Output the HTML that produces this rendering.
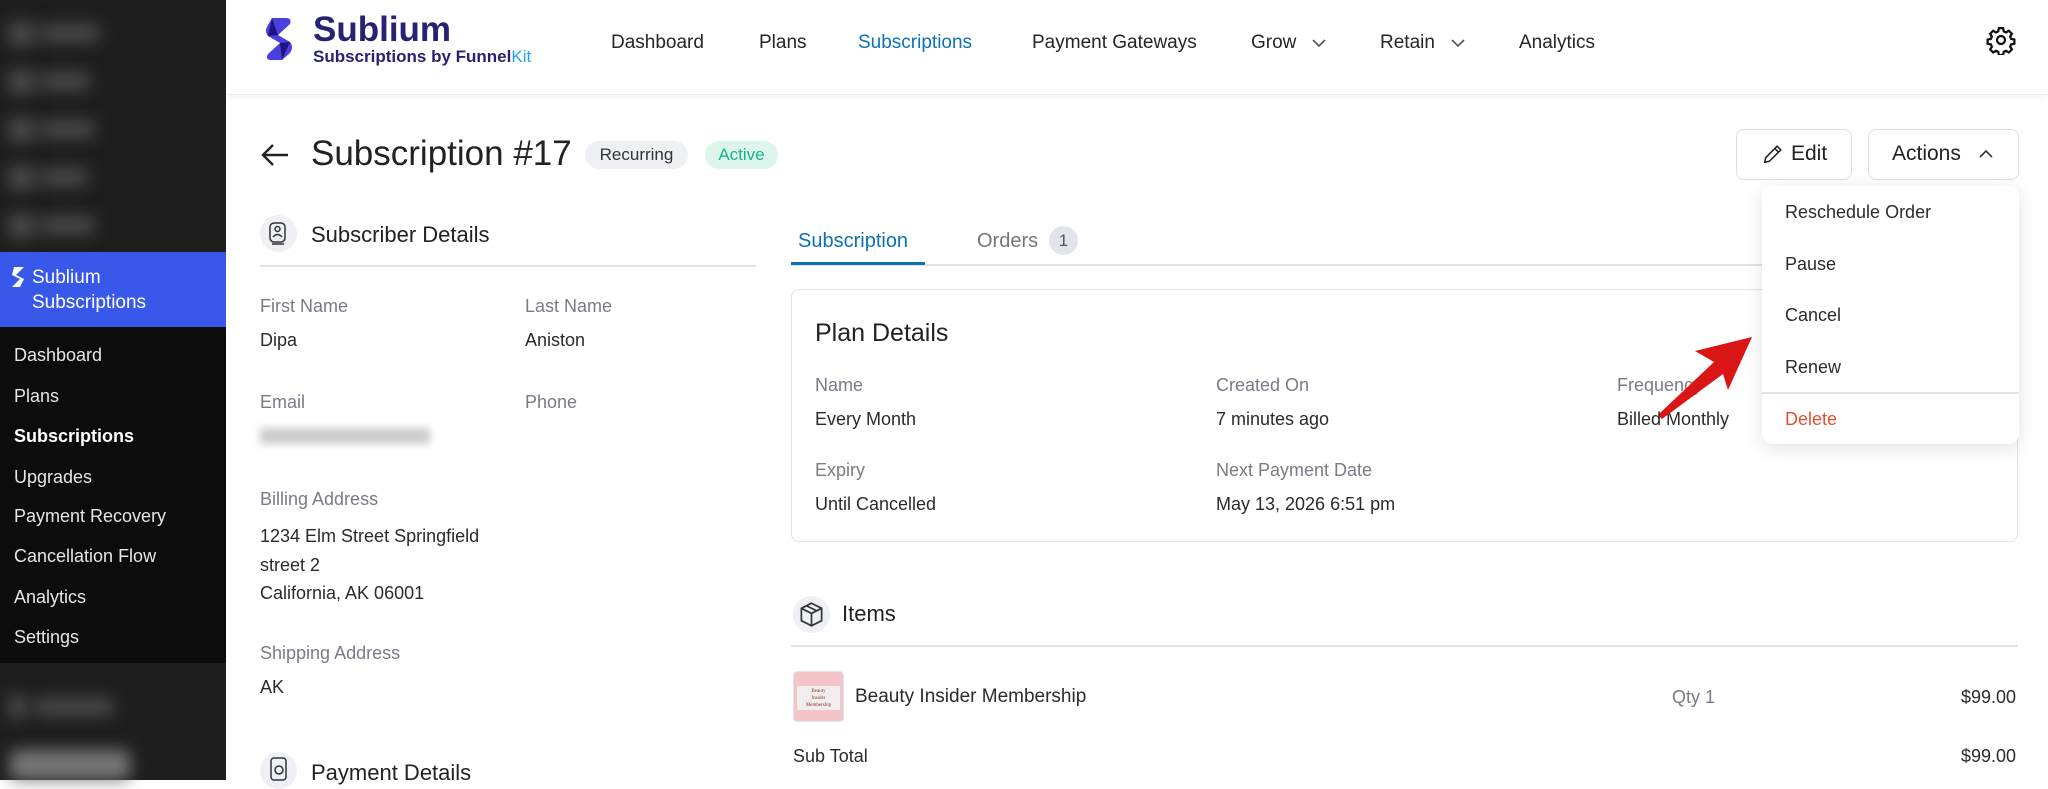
<!DOCTYPE html>
<html><head><meta charset="utf-8"><style>
*{margin:0;padding:0;box-sizing:border-box}
body{width:2048px;height:780px;overflow:hidden;background:#fff;font-family:"Liberation Sans",sans-serif;color:#1f1f24;position:relative}
.a{position:absolute;white-space:nowrap}
.lb{color:#7a7a88;font-size:18px;line-height:22px}
.v{color:#2a2a30;font-size:18px;line-height:22px}
.nav{font-size:19px;line-height:22px;top:32px;color:#25252b}
.sm{color:#e6e6e6;font-size:18px;line-height:22px;left:14px}
.blur{position:absolute;background:#4a4a4a;filter:blur(8px);border-radius:6px}
</style></head><body>
<!-- sidebar -->
<div class="a" style="left:0;top:0;width:226px;height:780px;background:#1e1e1e"></div>
<div class="blur" style="left:8px;top:22px;width:28px;height:24px"></div><div class="blur" style="left:40px;top:24px;width:60px;height:18px"></div>
<div class="blur" style="left:8px;top:70px;width:28px;height:24px"></div><div class="blur" style="left:40px;top:72px;width:50px;height:18px"></div>
<div class="blur" style="left:8px;top:118px;width:28px;height:24px"></div><div class="blur" style="left:40px;top:120px;width:55px;height:18px"></div>
<div class="blur" style="left:8px;top:166px;width:28px;height:24px"></div><div class="blur" style="left:40px;top:168px;width:48px;height:18px"></div>
<div class="blur" style="left:8px;top:214px;width:28px;height:24px"></div><div class="blur" style="left:40px;top:216px;width:55px;height:18px"></div>
<div class="a" style="left:0;top:252px;width:226px;height:75px;background:#3858e9"></div>
<svg class="a" style="left:10px;top:265px" width="20" height="24" viewBox="0 0 20 24"><path d="M4 2h10l-8 8 8 4-4 8H2l8-8-8-4z" fill="#fff"/></svg>
<div class="a" style="left:32px;top:265px;color:#fff;font-size:19px;line-height:25px">Sublium<br>Subscriptions</div>
<div class="a" style="left:0;top:327px;width:226px;height:336px;background:#0c0c0c"></div>
<div class="a sm" style="top:344px">Dashboard</div>
<div class="a sm" style="top:385px">Plans</div>
<div class="a sm" style="top:425px;color:#fff;font-weight:bold">Subscriptions</div>
<div class="a sm" style="top:466px">Upgrades</div>
<div class="a sm" style="top:505px">Payment Recovery</div>
<div class="a sm" style="top:545px">Cancellation Flow</div>
<div class="a sm" style="top:586px">Analytics</div>
<div class="a sm" style="top:626px">Settings</div>
<div class="blur" style="left:8px;top:695px;width:20px;height:24px"></div><div class="blur" style="left:34px;top:698px;width:80px;height:18px"></div>
<div class="blur" style="left:10px;top:750px;width:120px;height:30px;background:#777"></div>
<!-- header -->
<div class="a" style="left:226px;top:0;width:1822px;height:95px;background:#fff;box-shadow:0 2px 6px rgba(0,0,0,.06);border-bottom:1px solid #eee"></div>
<svg class="a" style="left:262px;top:15px" width="34" height="48" viewBox="0 0 30 48"><path d="M8 3 L22 3 Q28 3 26 9 L14 20 L26 27 Q30 32 26 38 L18 45 L6 45 Q1 44 4 39 L16 28 L4 21 Q0 16 4 10Z" fill="#4b3fe0"/><path d="M16 28 L26 27 L18 45Z M14 20 L4 21 L8 3Z" fill="#1e1580"/></svg>
<div class="a" style="left:313px;top:10px;font-size:35px;line-height:40px;font-weight:bold;color:#262373">Sublium</div>
<div class="a" style="left:313px;top:47px;font-size:17px;line-height:20px;font-weight:bold;color:#262373">Subscriptions by Funnel<span style="color:#1ea7f0;font-weight:normal">Kit</span></div>
<div class="a nav" style="left:611px">Dashboard</div>
<div class="a nav" style="left:759px">Plans</div>
<div class="a nav" style="left:858px;color:#0b72b5">Subscriptions</div>
<div class="a nav" style="left:1032px">Payment Gateways</div>
<div class="a nav" style="left:1251px">Grow</div>
<svg class="a" style="left:1311px;top:37px" width="16" height="12" viewBox="0 0 16 12" fill="none" stroke="#555" stroke-width="1.6"><path d="M2 3l6 6 6-6"/></svg>
<div class="a nav" style="left:1380px">Retain</div>
<svg class="a" style="left:1450px;top:37px" width="16" height="12" viewBox="0 0 16 12" fill="none" stroke="#555" stroke-width="1.6"><path d="M2 3l6 6 6-6"/></svg>
<div class="a nav" style="left:1519px">Analytics</div>
<svg class="a" style="left:1986px;top:25px" width="30" height="30" viewBox="0 0 24 24" fill="none" stroke="#111" stroke-width="1.8"><path d="M10.3 2.5h3.4l.5 2.6 1.8.9 2.3-1.4 2.4 2.4-1.4 2.3.8 1.8 2.6.5v3.4l-2.6.5-.8 1.8 1.4 2.3-2.4 2.4-2.3-1.4-1.8.8-.5 2.6h-3.4l-.5-2.6-1.8-.8-2.3 1.4-2.4-2.4 1.4-2.3-.8-1.8-2.6-.5v-3.4l2.6-.5.8-1.8-1.4-2.3 2.4-2.4 2.3 1.4 1.8-.9z"/><circle cx="12" cy="12" r="3.2"/></svg>
<!-- title -->
<svg class="a" style="left:260px;top:142px" width="30" height="26" viewBox="0 0 30 26" fill="none" stroke="#222" stroke-width="2.4"><path d="M28 13H3M13 3 3 13l10 10"/></svg>
<div class="a" style="left:311px;top:134px;font-size:35px;line-height:40px;font-weight:500;color:#222">Subscription #17</div>
<div class="a" style="left:585px;top:141px;width:103px;height:28px;border-radius:14px;background:#eef0f3;font-size:17px;line-height:28px;text-align:center;color:#333">Recurring</div>
<div class="a" style="left:705px;top:141px;width:73px;height:28px;border-radius:14px;background:#dcf6ec;font-size:17px;line-height:28px;text-align:center;color:#19b28a">Active</div>
<div class="a" style="left:1736px;top:129px;width:116px;height:51px;border:1.5px solid #dddde8;border-radius:8px;font-size:21px;line-height:48px;padding-left:54px;color:#222">Edit</div>
<svg class="a" style="left:1762px;top:143px" width="22" height="22" viewBox="0 0 24 24" fill="none" stroke="#222" stroke-width="1.7"><path d="M16.5 3.5l4 4L8 20l-5 1 1-5z M14 6l4 4"/></svg>
<div class="a" style="left:1868px;top:129px;width:151px;height:51px;border:1.5px solid #dddde8;border-radius:8px;font-size:21px;line-height:48px;padding-left:23px;color:#222">Actions</div>
<svg class="a" style="left:1978px;top:148px" width="16" height="12" viewBox="0 0 16 12" fill="none" stroke="#333" stroke-width="1.6"><path d="M2 9l6-6 6 6"/></svg>
<!-- subscriber -->
<div class="a" style="left:260px;top:215px;width:37px;height:37px;border-radius:50%;background:#eef0f6"></div>
<svg class="a" style="left:267px;top:221px" width="22" height="26" viewBox="0 0 22 26" fill="none" stroke="#333" stroke-width="1.5"><rect x="3" y="2" width="15" height="19" rx="4"/><circle cx="10.5" cy="8" r="2.5"/><path d="M6 16q4.5-5 9 0 M5 23h12"/></svg>
<div class="a" style="left:311px;top:222px;font-size:22px;line-height:26px;color:#222">Subscriber Details</div>
<div class="a" style="left:260px;top:265px;width:496px;height:2px;background:#e2e2ee"></div>
<div class="a lb" style="left:260px;top:295px">First Name</div><div class="a v" style="left:260px;top:329px">Dipa</div>
<div class="a lb" style="left:525px;top:295px">Last Name</div><div class="a v" style="left:525px;top:329px">Aniston</div>
<div class="a lb" style="left:260px;top:391px">Email</div>
<div class="a" style="left:260px;top:428px;width:170px;height:16px;background:#ccc;filter:blur(4px)"></div>
<div class="a lb" style="left:525px;top:391px">Phone</div>
<div class="a lb" style="left:260px;top:488px">Billing Address</div>
<div class="a v" style="left:260px;top:522px;line-height:28.5px">1234 Elm Street Springfield<br>street 2<br>California, AK 06001</div>
<div class="a lb" style="left:260px;top:642px">Shipping Address</div>
<div class="a v" style="left:260px;top:676px">AK</div>
<div class="a" style="left:260px;top:752px;width:37px;height:37px;border-radius:50%;background:#eef0f6"></div>
<svg class="a" style="left:268px;top:756px" width="22" height="26" viewBox="0 0 22 26" fill="none" stroke="#333" stroke-width="1.5"><rect x="3" y="2" width="15" height="22" rx="3"/><circle cx="11" cy="14" r="4"/></svg>
<div class="a" style="left:311px;top:760px;font-size:22px;line-height:26px;color:#222">Payment Details</div>
<!-- tabs -->
<div class="a" style="left:798px;top:229px;font-size:20px;line-height:24px;color:#0b72b5">Subscription</div>
<div class="a" style="left:977px;top:229px;font-size:20px;line-height:24px;color:#777">Orders</div>
<div class="a" style="left:1049px;top:226px;width:29px;height:29px;border-radius:50%;background:#e3e3ec;font-size:17px;line-height:29px;text-align:center;color:#555">1</div>
<div class="a" style="left:791px;top:264px;width:1227px;height:1.5px;background:#e2e2ee"></div>
<div class="a" style="left:791px;top:262px;width:134px;height:3px;background:#0b72b5"></div>
<!-- plan card -->
<div class="a" style="left:791px;top:289px;width:1227px;height:253px;border:1.5px solid #e2e2ee;border-radius:8px"></div>
<div class="a" style="left:815px;top:318px;font-size:25px;line-height:30px;color:#222">Plan Details</div>
<div class="a lb" style="left:815px;top:374px">Name</div><div class="a v" style="left:815px;top:408px">Every Month</div>
<div class="a lb" style="left:815px;top:459px">Expiry</div><div class="a v" style="left:815px;top:493px">Until Cancelled</div>
<div class="a lb" style="left:1216px;top:374px">Created On</div><div class="a v" style="left:1216px;top:408px">7 minutes ago</div>
<div class="a lb" style="left:1216px;top:459px">Next Payment Date</div><div class="a v" style="left:1216px;top:493px">May 13, 2026 6:51 pm</div>
<div class="a lb" style="left:1617px;top:374px">Frequency</div><div class="a v" style="left:1617px;top:408px">Billed Monthly</div>
<!-- items -->
<div class="a" style="left:793px;top:596px;width:37px;height:37px;border-radius:50%;background:#eef0f6"></div>
<svg class="a" style="left:798px;top:601px" width="27" height="27" viewBox="0 0 24 24" fill="none" stroke="#333" stroke-width="1.5"><path d="M12 2l9 4.5v11L12 22l-9-4.5v-11z M3 6.5l9 4.5 9-4.5 M12 11v11 M7.5 4.2l9 4.5"/></svg>
<div class="a" style="left:842px;top:601px;font-size:22px;line-height:26px;color:#222">Items</div>
<div class="a" style="left:791px;top:645px;width:1227px;height:1.5px;background:#e2e2ee"></div>
<div class="a" style="left:793px;top:671px;width:51px;height:51px;border-radius:4px;background:#f4c4c8;border:1px solid #e4e4f0"></div>
<div class="a" style="left:797px;top:686px;width:43px;height:24px;background:#f3eeee;font-size:5px;line-height:7px;color:#8b2a2a;text-align:center;padding-top:2px;font-family:'Liberation Serif',serif">Beauty<br>Insider<br>Membership</div>
<div class="a v" style="left:855px;top:686px;font-size:19px">Beauty Insider Membership</div>
<div class="a lb" style="left:1672px;top:686px">Qty 1</div>
<div class="a v" style="left:1940px;top:686px;width:76px;text-align:right">$99.00</div>
<div class="a v" style="left:793px;top:745px">Sub Total</div>
<div class="a v" style="left:1940px;top:745px;width:76px;text-align:right">$99.00</div>
<!-- dropdown -->
<div class="a" style="left:1762px;top:186px;width:257px;height:258px;background:#fff;border-radius:10px;box-shadow:0 4px 18px rgba(0,0,0,.12)"></div>
<div class="a v" style="left:1785px;top:201px;font-size:18px">Reschedule Order</div>
<div class="a v" style="left:1785px;top:253px;font-size:18px">Pause</div>
<div class="a v" style="left:1785px;top:304px;font-size:18px">Cancel</div>
<div class="a v" style="left:1785px;top:356px;font-size:18px">Renew</div>
<div class="a" style="left:1762px;top:392px;width:257px;height:1.5px;background:#e2e2ee"></div>
<div class="a v" style="left:1785px;top:408px;font-size:18px;color:#e2502f">Delete</div>
<!-- red arrow -->
<svg class="a" style="left:1650px;top:320px" width="110" height="110" viewBox="0 0 110 110"><path d="M102 17 L78 70 L73 54 L12 99 Q8 96 10 93 L64 42 L45 31 Z" fill="#d91515"/></svg>
</body></html>
